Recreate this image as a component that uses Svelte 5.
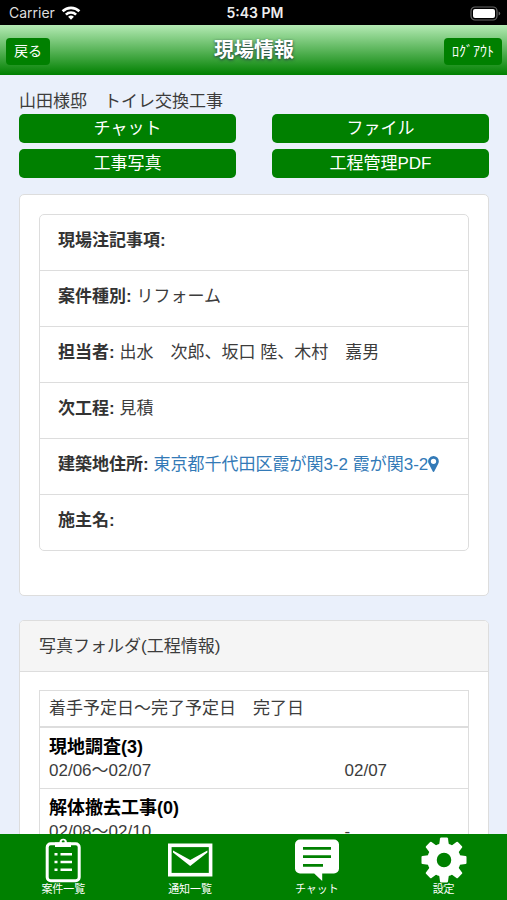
<script>
  const shortcuts = ["チャット", "ファイル", "工事写真", "工程管理PDF"];

  const details = [
    { label: "現場注記事項", value: "" },
    { label: "案件種別", value: "リフォーム" },
    { label: "担当者", value: "出水　次郎、坂口 陸、木村　嘉男" },
    { label: "次工程", value: "見積" },
    { label: "建築地住所", value: "東京都千代田区霞が関3-2 霞が関3-2", map: true },
    { label: "施主名", value: "" },
  ];

  const folders = [
    { name: "現地調査", count: 3, plan: "02/06〜02/07", done: "02/07" },
    { name: "解体撤去工事", count: 0, plan: "02/08〜02/10", done: "-" },
  ];

  const tabs = [
    { id: "list", label: "案件一覧" },
    { id: "mail", label: "通知一覧" },
    { id: "chat", label: "チャット" },
    { id: "settings", label: "設定" },
  ];

  const teeth = [0, 45, 90, 135, 180, 225, 270, 315];
</script>

<div class="screen">
  <div class="status">
    <span class="carrier">
      Carrier
      <svg width="20" height="14" viewBox="0 0 20 14" fill="none" stroke="#fff" stroke-width="2.6">
        <path d="M1.6 5.3a12 12 0 0 1 16.8 0" />
        <path d="M4.9 8.6a7.3 7.3 0 0 1 10.2 0" />
        <path d="M10 13.8l-2.9-3a4.2 4.2 0 0 1 5.8 0z" fill="#fff" stroke="none" />
      </svg>
    </span>
    <span class="time">5:43 PM</span>
    <span class="battery">
      <svg width="31" height="16" viewBox="0 0 31 16">
        <rect x="1" y="1" width="26" height="13" rx="4" fill="none" stroke="#666" stroke-width="1.2" />
        <rect x="3" y="3" width="22" height="9" rx="2" fill="#fff" />
        <path d="M28.6 5.4q1.6.6 1.6 2.1t-1.6 2.1z" fill="#666" />
      </svg>
    </span>
  </div>

  <header>
    <button class="nav">戻る</button>
    <h1>現場情報</h1>
    <button class="nav logout">ﾛｸﾞｱｳﾄ</button>
  </header>

  <main>
    <p class="site">山田様邸　トイレ交換工事</p>
    <div class="shortcuts">
      {#each shortcuts as name}
        <button>{name}</button>
      {/each}
    </div>

    <section class="panel info">
      <ul>
        {#each details as item}
          <li>
            <strong>{item.label}:</strong>
            {#if item.map}
              <a href="#map">{item.value}<svg width="11" height="16" viewBox="0 0 10 15"><path fill="currentColor" fill-rule="evenodd" d="M5 0a5 5 0 0 1 5 5c0 1.1-.3 1.8-.7 2.6L5.8 14.4a.9.9 0 0 1-1.6 0L.7 7.6A5 5 0 0 1 5 0zm0 2.5a2.5 2.5 0 1 0 0 5 2.5 2.5 0 0 0 0-5z" /></svg></a>
            {:else}
              {item.value}
            {/if}
          </li>
        {/each}
      </ul>
    </section>

    <section class="panel">
      <h2>写真フォルダ(工程情報)</h2>
      <div class="body">
        <table>
          <thead>
            <tr><th colspan="2">着手予定日〜完了予定日　完了日</th></tr>
          </thead>
          {#each folders as folder}
            <tbody>
              <tr class="name"><th colspan="2">{folder.name}({folder.count})</th></tr>
              <tr class="dates"><td class="plan">{folder.plan}</td><td>{folder.done}</td></tr>
            </tbody>
          {/each}
        </table>
      </div>
    </section>
  </main>

  <nav class="tabs">
    {#each tabs as tab}
      <a href="#{tab.id}">
        <svg width="46" height="46" viewBox="0 0 46 46">
          {#if tab.id === "list"}
            <rect x="7.2" y="6.7" width="32" height="37" rx="3.5" fill="none" stroke="#fff" stroke-width="3" />
            <path fill="#fff" fill-rule="evenodd" d="M15 10V5.5h4.5a3.7 3.7 0 0 1 7.4 0H31V10zM23.2 3.3a1.5 1.5 0 1 0 0 3 1.5 1.5 0 0 0 0-3z" />
            <path d="M20.5 17.3H32M20.5 25H32M20.5 32.8H32" stroke="#fff" stroke-width="2.6" />
            <path d="M14.5 17.3h3M14.5 25h3M14.5 32.8h3" stroke="#fff" stroke-width="2.6" />
          {:else if tab.id === "mail"}
            <rect x="2.8" y="8.3" width="40.8" height="29.4" fill="none" stroke="#fff" stroke-width="3.6" />
            <path d="M6 13.5L23.2 23 40.4 13.5v2L23.2 29 6 15.5z" fill="#fff" />
          {:else if tab.id === "chat"}
            <path d="M6 2.5h34a5 5 0 0 1 5 5v24a5 5 0 0 1-5 5H28.2V44l-8-7.5H6a5 5 0 0 1-5-5v-24a5 5 0 0 1 5-5z" fill="#fff" />
            <path d="M9 11.3h28M9 19.7h28M9 28.3h20" stroke="#008000" stroke-width="2.8" />
          {:else}
            <circle cx="23" cy="23" r="12" fill="none" stroke="#fff" stroke-width="9.5" />
            {#each teeth as angle}
              <path d="M18 9l1-7.6q.2-.9 1.1-.9h5.8q.9 0 1.1.9L28 9z" fill="#fff" transform="rotate({angle} 23 23)" />
            {/each}
          {/if}
        </svg>
        <span>{tab.label}</span>
      </a>
    {/each}
  </nav>
</div>

<style>
  :global(body) {
    margin: 0;
  }

  .screen {
    display: flex;
    flex-direction: column;
    height: 100vh;
    background: #eaf0fb;
    color: #3c3c3c;
    font-family: "Liberation Sans", "Noto Sans CJK JP", sans-serif;
    font-size: 17px;
    line-height: 24px;
  }

  button {
    padding: 0;
    border: none;
    background: #008000;
    color: #fff;
    font: inherit;
    cursor: pointer;
  }

  .status {
    display: grid;
    grid-template-columns: 1fr auto 1fr;
    align-items: center;
    height: 25px;
    padding: 0 6px 0 9px;
    background: #000;
    color: #ddd;
    font-family: Inter, sans-serif;
    font-size: 14px;
    flex: none;
  }

  .carrier {
    display: flex;
    align-items: center;
    gap: 6px;
  }

  .time {
    color: #eee;
    font-weight: 600;
  }

  .battery {
    display: flex;
    justify-content: flex-end;
    padding-top: 2px;
  }

  header {
    display: grid;
    grid-template-columns: 1fr auto 1fr;
    align-items: center;
    height: 50px;
    padding: 2px 5px 0 6px;
    box-sizing: border-box;
    background: linear-gradient(#b4eab4, #008000);
    flex: none;
  }

  .nav {
    justify-self: start;
    height: 27px;
    padding: 0 8px;
    border-radius: 4px;
    font-size: 14px;
  }

  .logout {
    justify-self: end;
  }

  h1 {
    margin: 0;
    padding-bottom: 2px;
    color: #fff;
    font-size: 20px;
    text-shadow: 0 1px 3px #234;
  }

  main {
    flex: 1;
    min-height: 0;
    overflow-y: auto;
    scrollbar-width: none;
    padding: 15px 18px 0 19px;
  }

  .site {
    margin: 0;
  }

  .shortcuts {
    display: grid;
    grid-template-columns: 1fr 1fr;
    gap: 6px 36px;
    margin-bottom: 16px;
  }

  .shortcuts button {
    height: 29px;
    border-radius: 5px;
  }

  .panel {
    margin-bottom: 24px;
    border: 1px solid #ddd;
    border-radius: 5px;
    background: #fff;
    overflow: hidden;
  }

  .info {
    padding: 19px 19px 44px;
  }

  ul {
    margin: 0;
    padding: 0;
    border: 1px solid #ddd;
    border-radius: 5px;
    list-style: none;
  }

  li {
    padding: 14px 18px 17px;
  }

  li + li {
    border-top: 1px solid #ddd;
  }

  strong {
    color: #333;
  }

  a {
    color: #337ab7;
    text-decoration: none;
  }

  li svg {
    vertical-align: -2px;
  }

  h2 {
    margin: 0;
    padding: 14px 19px 12px;
    border-bottom: 1px solid #ddd;
    background: #f5f5f5;
    font-size: 17px;
    font-weight: 400;
  }

  .body {
    padding: 18px 19px;
  }

  table {
    width: 100%;
    border: 1px solid #ddd;
    border-collapse: collapse;
  }

  th,
  td {
    padding: 0 9px;
    text-align: left;
  }

  thead th {
    padding: 6px 9px 5px;
    border-bottom: 2px solid #ddd;
    font-weight: 400;
  }

  tbody {
    border-bottom: 1px solid #ddd;
  }

  .name th {
    padding-top: 7px;
    color: #000;
    font-size: 18px;
  }

  .dates td {
    padding-bottom: 5px;
  }

  .dates .plan {
    box-sizing: border-box;
    width: 69%;
  }

  .tabs {
    display: grid;
    grid-template-columns: repeat(4, 1fr);
    height: 66px;
    background: #008000;
    flex: none;
  }

  .tabs a {
    display: flex;
    flex-direction: column;
    align-items: center;
    padding-top: 3px;
    color: #fff;
    font-size: 11px;
    line-height: 12px;
  }
</style>
